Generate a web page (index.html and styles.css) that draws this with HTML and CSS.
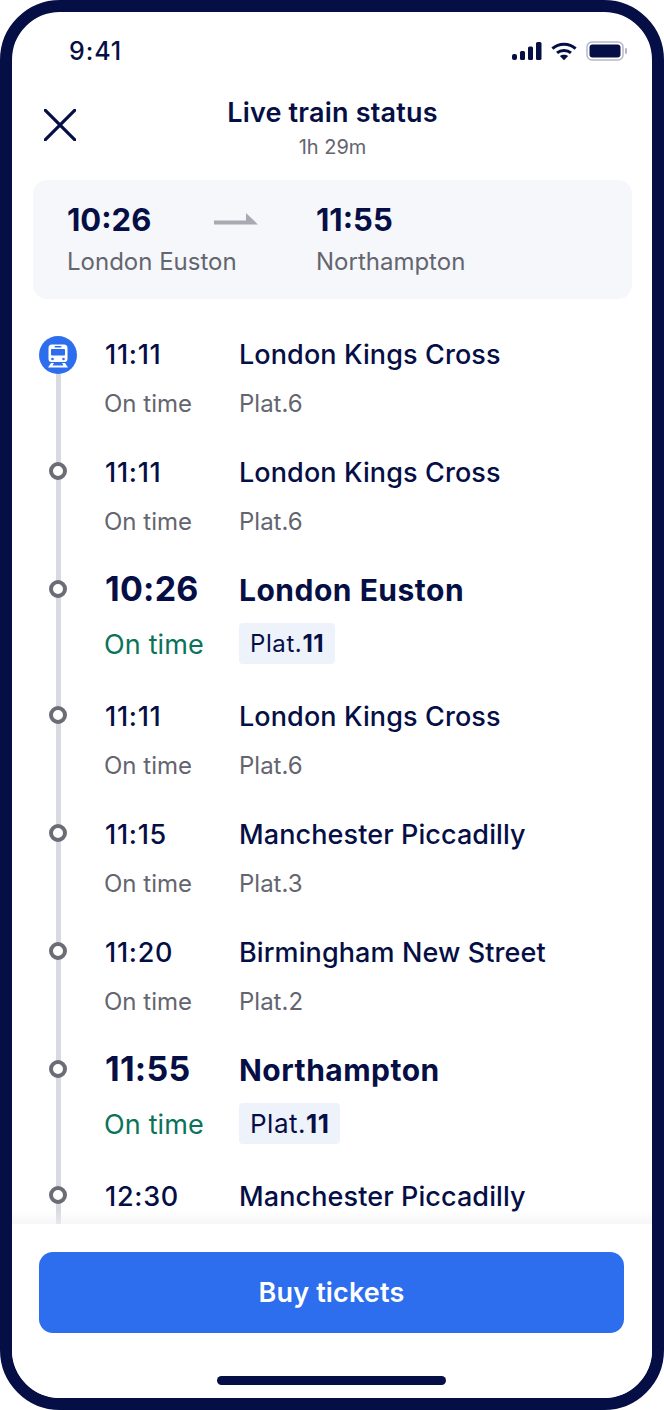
FILE: index.html
```html
<!DOCTYPE html>
<html lang="en">
<head>
<meta charset="utf-8">
<title>Live train status</title>
<link rel="stylesheet" href="styles.css">
</head>
<body>
<div class="phone">
  <div class="status">
    <span class="clock">9:41</span>
    <div class="status-icons">
      <svg width="30" height="20" viewBox="0 0 30 20"><g fill="#050f45"><rect x="0" y="13" width="5" height="6" rx="2"/><rect x="8" y="10" width="5" height="9" rx="1.5"/><rect x="16" y="5.500" width="5" height="13.500" rx="1.500"/><rect x="24" y="1" width="5.500" height="18" rx="1.500"/></g></svg>
      <svg width="26" height="20" viewBox="0 0 28 20"><g fill="none" stroke="#050f45" stroke-width="3.200"><path d="M1.500 7.500C8.500 1 19.500 1 26.500 7.500"/><path d="M6.500 12C10.500 8.500 17.500 8.500 21.500 12"/></g><path d="M9.500 15.500C12 13.500 16 13.500 18.500 15.500L14 20Z" fill="#050f45"/></svg>
      <svg width="42" height="20" viewBox="0 0 42 20"><rect x="1" y="1" width="36" height="18" rx="5" fill="none" stroke="#b5b8c8" stroke-width="1.500"/><rect x="3.500" y="3.500" width="31" height="13" rx="3" fill="#050f45"/><rect x="39" y="7" width="2" height="6" rx="1" fill="#b5b8c8"/></svg>
    </div>
  </div>

  <header class="topbar">
    <svg class="close" width="32" height="32" viewBox="0 0 32 32"><path d="M1 1L31 31M31 1L1 31" fill="none" stroke="#050f45" stroke-width="3.200" stroke-linecap="round"/></svg>
    <div class="title">
      <h1>Live train status</h1>
      <p>1h 29m</p>
    </div>
  </header>

  <section class="summary">
    <div class="stop-col origin">
      <strong>10:26</strong>
      <span>London Euston</span>
    </div>
    <svg class="arrow" width="44" height="16" viewBox="0 0 44 16"><path d="M0 8.500H32V1L44 12.500H0Z" fill="#a8aab2"/></svg>
    <div class="stop-col">
      <strong>11:55</strong>
      <span>Northampton</span>
    </div>
  </section>

  <main class="timeline">
    <div class="rail"></div>

    <div class="row">
      <div class="marker current">
        <svg width="38" height="38" viewBox="0 0 38 38"><circle cx="19" cy="19" r="19" fill="#2d6eee"/><g fill="#fff"><path d="M13 8.500h12a3.500 3.500 0 0 1 3.500 3.500v11a3 3 0 0 1-3 3h-13a3 3 0 0 1-3-3V12a3.500 3.500 0 0 1 3.500-3.500Z"/><path d="M12 27h3l-1.500 2.500h11L23 27h3l3 4.500H9Z"/></g><rect x="12" y="13" width="14" height="6.500" rx="1" fill="#2d6eee"/><rect x="15.500" y="10" width="7" height="1.500" rx=".7" fill="#2d6eee"/><circle cx="13.500" cy="23" r="1.300" fill="#2d6eee"/><circle cx="24.500" cy="23" r="1.300" fill="#2d6eee"/></svg>
      </div>
      <span class="time">11:11</span><span class="station">London Kings Cross</span>
      <span class="state">On time</span><span class="plat">Plat.6</span>
    </div>

    <div class="row">
      <div class="marker"></div>
      <span class="time">11:11</span><span class="station">London Kings Cross</span>
      <span class="state">On time</span><span class="plat">Plat.6</span>
    </div>

    <div class="row key">
      <div class="marker"></div>
      <span class="time">10:26</span><span class="station">London Euston</span>
      <span class="state">On time</span><span class="plat"><span class="chip chip-small">Plat.<b>11</b></span></span>
    </div>

    <div class="row">
      <div class="marker"></div>
      <span class="time">11:11</span><span class="station">London Kings Cross</span>
      <span class="state">On time</span><span class="plat">Plat.6</span>
    </div>

    <div class="row">
      <div class="marker"></div>
      <span class="time">11:15</span><span class="station">Manchester Piccadilly</span>
      <span class="state">On time</span><span class="plat">Plat.3</span>
    </div>

    <div class="row">
      <div class="marker"></div>
      <span class="time">11:20</span><span class="station">Birmingham New Street</span>
      <span class="state">On time</span><span class="plat">Plat.2</span>
    </div>

    <div class="row key">
      <div class="marker"></div>
      <span class="time">11:55</span><span class="station">Northampton</span>
      <span class="state">On time</span><span class="plat"><span class="chip">Plat.<b>11</b></span></span>
    </div>

    <div class="row">
      <div class="marker"></div>
      <span class="time">12:30</span><span class="station">Manchester Piccadilly</span>
    </div>
  </main>

  <footer class="footer">
    <button class="buy">Buy tickets</button>
    <div class="home"></div>
  </footer>
</div>
</body>
</html>
```

FILE: styles.css
```css
* { box-sizing: border-box; }
html, body { margin: 0; padding: 0; background: #fff; }
body { width: 664px; height: 1410px; overflow: hidden; font-family: Inter, "Liberation Sans", sans-serif; color: #050f45; }

.phone {
  width: 664px; height: 1410px;
  border: 12px solid #050f45; border-radius: 60px;
  background: #fff; overflow: hidden;
  display: flex; flex-direction: column;
}

.status { height: 62px; flex: none; display: flex; justify-content: space-between; align-items: flex-start; padding: 24px 24px 0 57px; }
.clock { font-size: 25px; line-height: 30px; font-weight: 500; letter-spacing: .9px; }
.status-icons { display: flex; align-items: center; gap: 9px; padding-top: 5px; }

.topbar { height: 106px; flex: none; position: relative; }
.close { position: absolute; left: 32px; top: 35px; }
.title { text-align: center; padding: 21px 0 0 1px; }
.title h1 { margin: 0; font-size: 27px; line-height: 36px; font-weight: 600; letter-spacing: .2px; }
.title p { margin: 0; font-size: 20px; line-height: 32px; color: #63656f; }

.summary {
  flex: none; height: 119px; margin: 0 20px 0 21px;
  background: #f6f7fb; border-radius: 14px;
  display: flex; align-items: flex-start; padding: 20px 0 0 34px;
}
.stop-col { display: flex; flex-direction: column; }
.stop-col.origin { width: 169px; }
.stop-col strong { font-size: 31px; line-height: 40px; font-weight: 700; }
.stop-col span { font-size: 24px; line-height: 44px; color: #63656f; white-space: nowrap; }
.arrow { margin: 12px 58px 0 -22px; flex: none; }

.timeline { flex: 1; min-height: 0; position: relative; overflow: hidden; padding: 34px 0 0 0; background: #fff; }
.timeline::after { content: ""; position: absolute; left: 0; right: 0; bottom: 0; height: 14px; background: linear-gradient(rgba(240,240,243,0), rgba(240,240,243,.6)); }
.rail { position: absolute; left: 44px; top: 56px; bottom: 0; width: 5px; background: #d9d9e1; }

.row {
  position: relative; display: grid;
  grid-template-columns: 135px 1fr;
  grid-template-rows: 42px 42px;
  row-gap: 7px; height: 118px;
  padding-left: 92px;
  align-items: center;
}
.time { font-size: 27px; font-weight: 500; letter-spacing: .7px; margin-left: 1px; }
.station { font-size: 27px; font-weight: 500; white-space: nowrap; letter-spacing: .1px; }
.state, .plat { font-size: 24px; color: #63656f; }

.marker {
  position: absolute; left: 37px; top: 11px;
  width: 18px; height: 18px; border-radius: 50%;
  border: 4px solid #6b6c76; background: #fff;
}
.marker.current { left: 27px; top: 3px; width: 38px; height: 38px; border: 0; background: none; }
.marker.current svg { display: block; }

.row.key { height: 126px; grid-template-rows: 42px 44px; row-gap: 11px; }
.key .time { font-size: 34px; font-weight: 700; line-height: 38px; margin-bottom: 3px; letter-spacing: .25px; }
.key .station { font-size: 30px; font-weight: 700; letter-spacing: .5px; }
.key .state { font-size: 27px; color: #0a7359; letter-spacing: .15px; }
.key .plat { color: #050f45; align-self: start; display: flex; }

.chip { display: block; height: 41px; line-height: 41px; margin-top: 1px; padding: 0 11px; background: #eef2fb; border-radius: 4px; font-size: 26px; letter-spacing: .5px; }
.chip-small { font-size: 24px; letter-spacing: .6px; }
.chip b { font-weight: 700; }

.footer { flex: none; height: 174px; background: #fff; position: relative; z-index: 1; display: flex; flex-direction: column; align-items: center; padding: 28px 1px 0 0; }
.buy { width: 585px; height: 81px; border: 0; border-radius: 14px; background: #2d6eee; color: #fff; font-family: inherit; font-size: 27px; font-weight: 600; letter-spacing: .15px; }
.home { width: 229px; height: 9px; margin-top: 43px; border-radius: 5px; background: #050f45; }
```
